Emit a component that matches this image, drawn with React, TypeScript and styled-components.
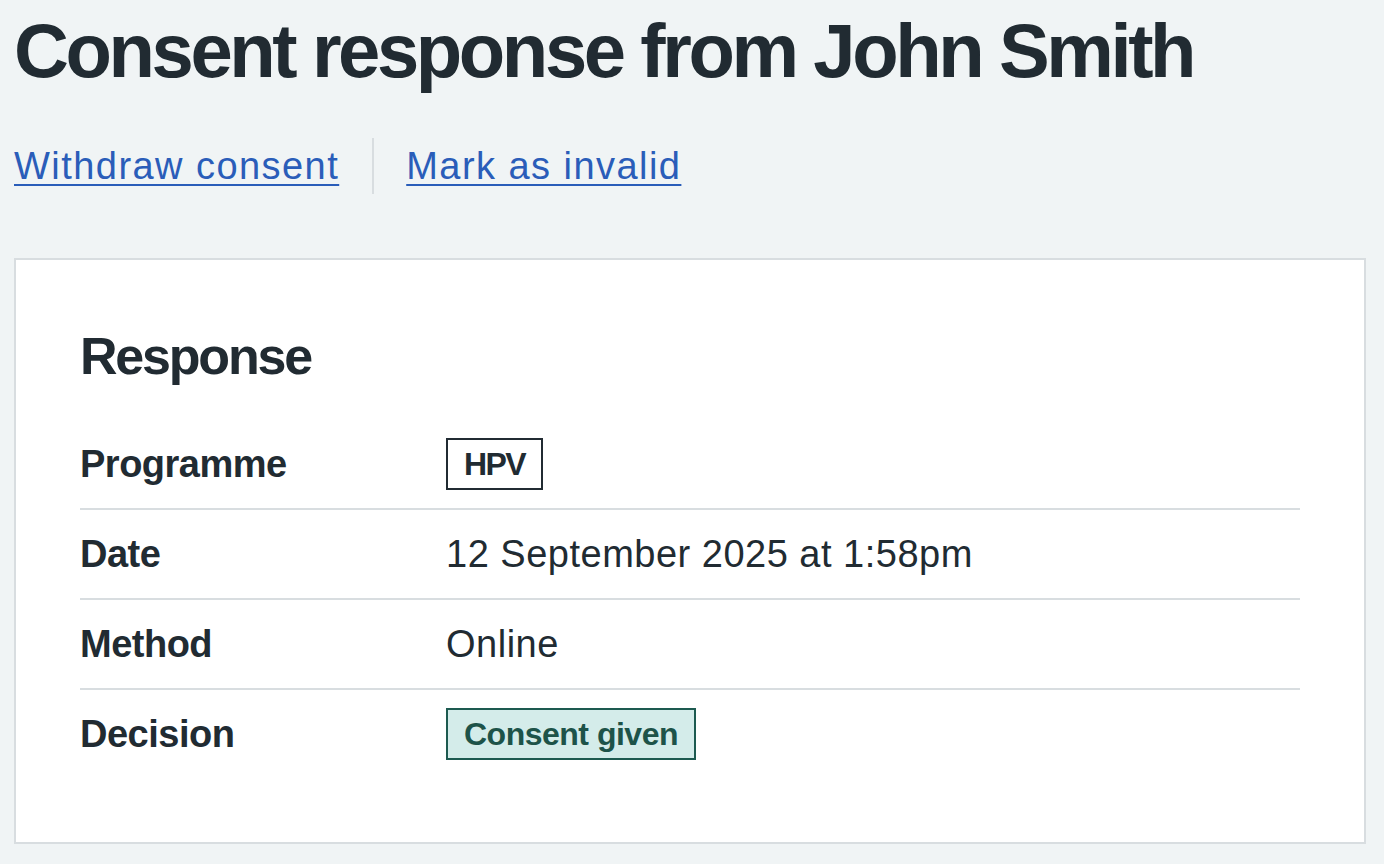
import React from 'react';
import styled, { createGlobalStyle } from 'styled-components';

const GlobalStyle = createGlobalStyle`
  html, body {
    margin: 0;
    padding: 0;
    background: #f0f4f5;
    color: #212b32;
    font-family: 'Liberation Sans', Arial, sans-serif;
  }
`;

const Page = styled.main`
  padding: 8px 14px 0 14px;
  width: 1352px;
`;

const Title = styled.h1`
  margin: 0 0 44px 0;
  font-size: 76px;
  line-height: 86px;
  font-weight: 700;
  letter-spacing: -3.4px;
`;

const ActionList = styled.ul`
  display: flex;
  list-style: none;
  margin: 0 0 64px 0;
  padding: 0;
`;

const ActionItem = styled.li<{ $divided?: boolean }>`
  font-size: 38px;
  line-height: 56px;
  padding-right: 33px;
  ${(p) => p.$divided && `
    border-left: 2px solid #d8dde0;
    padding-left: 32px;
  `}
`;

const Link = styled.a`
  color: #2a5db9;
  letter-spacing: 1.45px;
  text-decoration: underline;
  text-decoration-thickness: 2px;
  text-underline-offset: 5px;
  cursor: pointer;
`;

const Card = styled.section`
  background: #ffffff;
  border: 2px solid #d8dde0;
  padding: 64px;
`;

const CardHeading = styled.h2`
  margin: 0 0 32px 0;
  font-size: 52px;
  line-height: 64px;
  font-weight: 700;
  letter-spacing: -2.2px;
`;

const SummaryList = styled.dl`
  margin: 0;
`;

const SummaryRow = styled.div<{ $last?: boolean }>`
  display: flex;
  border-bottom: ${(p) => (p.$last ? 'none' : '2px solid #d8dde0')};
`;

const Key = styled.dt`
  width: 30%;
  flex: none;
  padding: 16px 48px 16px 0;
  box-sizing: border-box;
  font-size: 38px;
  line-height: 56px;
  font-weight: 700;
  letter-spacing: -0.5px;
`;

const Value = styled.dd`
  margin: 0;
  padding: 16px 0;
  font-size: 38px;
  line-height: 56px;
  letter-spacing: 0.5px;
`;

const Tag = styled.strong<{ $tone: 'white' | 'aqua' }>`
  display: inline-block;
  vertical-align: top;
  margin-top: 2px;
  padding: 8px 16px;
  font-size: 32px;
  line-height: 32px;
  font-weight: 700;
  letter-spacing: ${(p) => (p.$tone === 'aqua' ? '-0.5px' : '-1.6px')};
  border: 2px solid ${(p) => (p.$tone === 'aqua' ? '#1d5a50' : '#212b32')};
  background: ${(p) => (p.$tone === 'aqua' ? '#d4ecea' : '#ffffff')};
  color: ${(p) => (p.$tone === 'aqua' ? '#1d5349' : '#212b32')};
`;

const rows: { key: string; value: React.ReactNode }[] = [
  { key: 'Programme', value: <Tag $tone="white">HPV</Tag> },
  { key: 'Date', value: '12 September 2025 at 1:58pm' },
  { key: 'Method', value: 'Online' },
  { key: 'Decision', value: <Tag $tone="aqua">Consent given</Tag> },
];

export default function App() {
  return (
    <>
      <GlobalStyle />
      <Page>
        <Title>Consent response from John Smith</Title>
        <ActionList>
          <ActionItem>
            <Link href="#">Withdraw consent</Link>
          </ActionItem>
          <ActionItem $divided>
            <Link href="#">Mark as invalid</Link>
          </ActionItem>
        </ActionList>
        <Card>
          <CardHeading>Response</CardHeading>
          <SummaryList>
            {rows.map((row, i) => (
              <SummaryRow key={row.key} $last={i === rows.length - 1}>
                <Key>{row.key}</Key>
                <Value>{row.value}</Value>
              </SummaryRow>
            ))}
          </SummaryList>
        </Card>
      </Page>
    </>
  );
}
